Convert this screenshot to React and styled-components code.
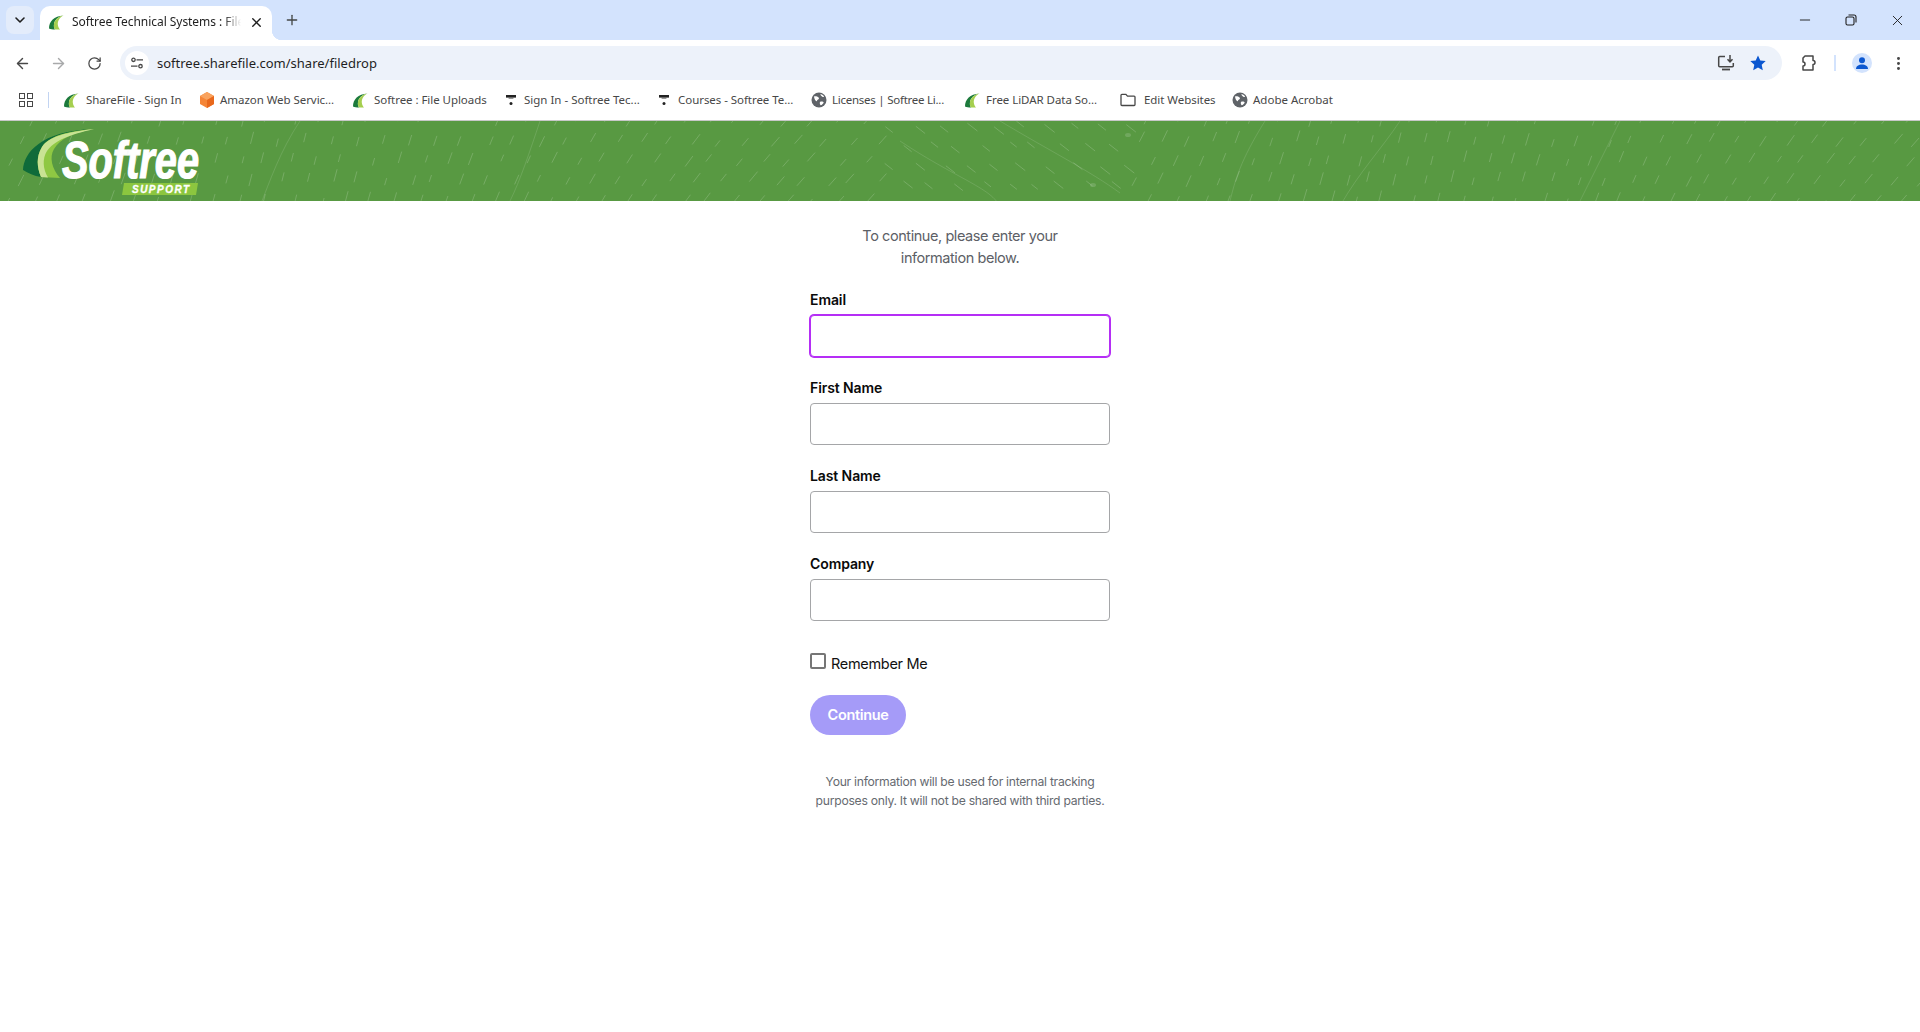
import React, { useMemo } from "react";
import styled, { createGlobalStyle } from "styled-components";
import { ArrowLeft, ArrowRight, RotateCw, Plus, X, ChevronDown, Minus, EllipsisVertical } from "lucide-react";

const Global = createGlobalStyle`
  html, body { margin: 0; padding: 0; background: #fff; height: 100%; overflow: hidden; }
  * { box-sizing: border-box; }
`;

const Page = styled.div`display:flex;flex-direction:column;height:1032px;background:#fff;`;
const TabStrip = styled.div`display:flex;align-items:flex-end;height:40px;background:#d3e3fd;color:#1f1f1f;flex:none;`;
const TabSearch = styled.button`
  width:28px;height:28px;margin:0 6px 6px 6px;border:0;padding:0;border-radius:8px;background:#e3ecfb;
  display:flex;align-items:center;justify-content:center;color:#1f1f1f;
`;
const Tab = styled.div`
  position:relative;width:232px;height:34px;background:#fff;border-radius:10px 10px 0 0;display:flex;align-items:center;padding:0 8px 2px 8px;
  &::after{content:"";position:absolute;right:-10px;bottom:0;width:10px;height:10px;background:radial-gradient(circle at 100% 0,transparent 10px,#fff 10.5px);}
`;
const TabTitle = styled.span`
  flex:1;margin:0 8px;font:12px/16px "Noto Sans",sans-serif;letter-spacing:-.05px;color:#1f1f1f;white-space:nowrap;overflow:hidden;
  -webkit-mask-image:linear-gradient(90deg,#000 90%,transparent);mask-image:linear-gradient(90deg,#000 90%,transparent);
`;
const NewTab = styled.div`width:28px;height:28px;margin:0 0 6px 6px;display:flex;align-items:center;justify-content:center;color:#444746;`;
const WinControls = styled.div`margin-left:auto;display:flex;align-self:stretch;color:#1f1f1f;`;
const WinBtn = styled.div`width:46px;height:40px;display:flex;align-items:center;justify-content:center;`;

const Toolbar = styled.div`display:flex;align-items:center;height:46px;background:#fff;border-radius:8px 8px 0 0;flex:none;padding:0 4px;`;
const NavBtn = styled.div`
  width:36px;height:36px;display:flex;align-items:center;justify-content:center;color:${p=>p.$off?"#a8a9aa":"#474747"};
`;
const Address = styled.div`
  flex:1;height:34px;margin-left:8px;background:#edf2fa;border-radius:17px;display:flex;align-items:center;padding:0 15px 0 5px;
`;
const SiteBtn = styled.div`width:24px;height:24px;border-radius:50%;background:#fff;display:flex;align-items:center;justify-content:center;color:#474747;`;
const Url = styled.span`margin-left:8px;font:13px/18px "Noto Sans",sans-serif;color:#1f1f1f;white-space:nowrap;`;
const AddrEnd = styled.div`margin-left:auto;display:flex;align-items:center;gap:14px;`;
const ToolRight = styled.div`display:flex;align-items:center;margin-left:8px;padding-right:0;`;
const VDivider = styled.div`width:2px;height:16px;background:#d3e3fd;margin:0 8px 0 8px;`;
const Avatar = styled.div`width:20px;height:20px;border-radius:50%;background:#d3e3fd;display:flex;align-items:center;justify-content:center;`;

const Bookmarks = styled.div`display:flex;align-items:center;height:35px;background:#fff;border-bottom:1px solid #c8c8c8;flex:none;padding:0 0 6px 19px;`;
const AppsGrid = styled.div`display:grid;grid-template-columns:6px 6px;gap:2px;`;
const AppsCell = styled.i`display:block;width:6px;height:6px;border:1.3px solid #474747;`;
const BmDivider = styled.div`width:1px;height:16px;background:#c2d4f2;margin:0 13px 0 15px;`;
const BmItem = styled.div`display:flex;align-items:center;width:${p=>p.$w}px;flex:none;padding-left:1px;`;
const BmIconSlot = styled.div`width:${p=>p.$s}px;display:flex;flex:none;justify-content:flex-start;`;
const BmLabel = styled.span`font:11.5px/16px "Noto Sans",sans-serif;letter-spacing:${p=>p.$sp||0}px;color:#474747;white-space:nowrap;`;

const Banner = styled.header`position:relative;height:80px;flex:none;background:#589942;overflow:hidden;`;
const Pattern = styled.svg`position:absolute;inset:0;width:100%;height:100%;`;
const Logo = styled.svg`position:relative;display:block;width:210px;height:80px;`;

const Main = styled.main`width:300px;margin:0 auto;padding-top:24px;font-family:Inter,"Noto Sans",sans-serif;`;
const Intro = styled.p`margin:0 auto 21px;max-width:230px;text-align:center;font-size:14.5px;line-height:22px;color:#5c6066;letter-spacing:-.43px;`;
const Field = styled.div`margin-bottom:21px;`;
const Label = styled.label`display:block;height:20px;margin-bottom:5px;font-size:14px;line-height:20px;font-weight:600;color:#0a0a0a;letter-spacing:-.1px;`;
const Input = styled.input`
  display:block;width:300px;height:42px;background:#fff;border-radius:4px;outline:0;padding:0 10px;
  border:1px solid ${p=>p.$focus?"#b52ef5":"#a5a6a8"};
  box-shadow:${p=>p.$focus?"0 0 0 1px #b52ef5":"none"};
`;
const CheckRow = styled.div`display:flex;align-items:flex-start;height:24px;margin-top:31px;`;
const Check = styled.input`
  appearance:none;width:16px;height:16px;margin:1px 5px 0 0;background:#fff;border:2px solid #767676;border-radius:2px;
`;
const CheckLabel = styled.label`font-size:14.5px;line-height:24px;color:#111;letter-spacing:-.32px;`;
const Continue = styled.button`
  display:block;width:96px;height:40px;margin-top:19px;border:0;border-radius:20px;background:#a59bf8;color:#fff;
  font:600 14.5px/40px Inter,sans-serif;letter-spacing:-.35px;padding:0;
`;
const Note = styled.p`margin:37px 0 0;text-align:center;font-size:12.2px;line-height:19px;color:#666a70;letter-spacing:-.28px;`;
const Fields = styled.div``;

const Swoosh = ({ s = 16 }) => (
  <svg width={s} height={s} viewBox="0 0 16 16" style={{ display: "block" }}>
    <path d="M1 14.500C1 7.500 6 2 15.500 1.500 10 2.800 6.500 6 6 10 5.700 12.500 6 14 7 15.500 4.500 15.500 2.500 15.300 1 14.500Z" fill="#1c7a3c" />
    <path d="M7 15.500C6 14 5.700 12.500 6 10 6.500 6 10 2.800 15.500 1.500 11.500 3.500 9.500 7 9.800 10.500 10 12.500 10.800 14.200 12 15.500Z" fill="#a5cf4f" />
  </svg>
);
const Cube = () => (
  <svg width="18" height="18" viewBox="0 0 18 18" style={{ display: "block" }}>
    <path d="M9 1l7 4v8l-7 4-7-4V5z" fill="#f58536" />
    <path d="M9 1l7 4-7 4-7-4z" fill="#f9a35e" />
    <path d="M9 9l7-4v8l-7 4z" fill="#e8681c" />
  </svg>
);
const Tee = () => (
  <svg width="12" height="12" viewBox="0 0 12 12" style={{ display: "block" }}>
    <rect x="1" y="1" width="10" height="2.6" fill="#222" />
    <rect x="3.6" y="3.6" width="4.8" height="1" fill="#555" />
    <circle cx="6" cy="9.500" r="1.500" fill="#222" />
  </svg>
);
const Globe = () => (
  <svg width="16" height="16" viewBox="0 0 16 16" style={{ display: "block" }}>
    <circle cx="8" cy="8" r="7.500" fill="#5f6368" />
    <path d="M3 4.400c1.500-.4 3.600.1 4.600 1.200 1 1-.1 2-1.300 2.300-.3 1.400-1.200 1.600-1.700.7C4 7.600 3.200 6.300 3 4.400ZM9.200 9.800c1.500-.7 3-.3 3.500.6-.6 1.400-1.800 2.500-3 2.800-.9-.9-1.300-2.300-.5-3.400ZM9.600 2c1.600.4 2.900 1.500 3.500 2.800-1 .5-2.200.1-2.600-.7-.4-.7-1.300-1-.9-2.100Z" fill="#fff" />
  </svg>
);
const Folder = () => (
  <svg width="16" height="14" viewBox="0 0 16 14" style={{ display: "block" }}>
    <path d="M1 2.200c0-.5.4-.9.9-.9h4l1.600 1.800h6.600c.5 0 .9.4.9.9v7.600c0 .5-.4.9-.9.9H1.900c-.5 0-.9-.4-.9-.9Z" fill="none" stroke="#474747" strokeWidth="1.300" />
  </svg>
);

const bookmarks = [
  { w: 135, s: 23, icon: <Swoosh />, text: "ShareFile - Sign In", sp: -0.05 },
  { w: 154, s: 22, icon: <Cube />, text: "Amazon Web Servic...", sp: -0.05 },
  { w: 153, s: 22, icon: <Swoosh />, text: "Softree : File Uploads", sp: -0.05 },
  { w: 153, s: 19, icon: <Tee />, text: "Sign In - Softree Tec..." },
  { w: 153, s: 20, icon: <Tee />, text: "Courses - Softree Te...", sp: -0.05 },
  { w: 153, s: 21, icon: <Globe />, text: "Licenses | Softree Li...", sp: -0.25 },
  { w: 156, s: 22, icon: <Swoosh />, text: "Free LiDAR Data So...", sp: -0.05 },
  { w: 112, s: 24, icon: <Folder />, text: "Edit Websites", sp: -0.05 },
  { w: 110, s: 21, icon: <Globe />, text: "Adobe Acrobat" },
];

function rnd(seed) {
  const x = Math.sin(seed * 127.1) * 43758.5453;
  return x - Math.floor(x);
}

const BannerPattern = () => {
  const dashes = useMemo(() => {
    const out = [];
    let n = 1;
    for (let gx = 0; gx < 1930; gx += 26) {
      for (let gy = 0; gy < 90; gy += 20) {
        n++;
        const x = gx + rnd(n) * 10 + (gy % 40 ? 13 : 0);
        const y = gy + rnd(n + 500) * 6;
        const phase = (x % 1130) / 1130;
        const back = x > 880 && x < 1130;
        const ang = back ? 38 : 62 + 14 * Math.sin(phase * 6.28);
        const len = 7 + rnd(n + 900) * 6;
        const a = (ang * Math.PI) / 180;
        const dx = Math.cos(a) * len;
        const dy = Math.sin(a) * len;
        out.push(back ? `M${x.toFixed(1)} ${y.toFixed(1)}l${dx.toFixed(1)} ${dy.toFixed(1)}` : `M${x.toFixed(1)} ${y.toFixed(1)}l${dx.toFixed(1)} ${(-dy).toFixed(1)}`);
      }
    }
    return out.join("");
  }, []);
  return (
    <Pattern viewBox="0 0 1920 80" preserveAspectRatio="none" aria-hidden="true">
      <path d={dashes} stroke="#fff" strokeOpacity=".18" strokeWidth="1" fill="none" />
      <path d="M900 20C960 60 1000 70 1000 90M1000 0C1050 30 1090 50 1120 72M1265 0C1240 40 1235 60 1230 80M1400 0C1380 30 1360 50 1340 85M540 0C530 30 520 60 510 80M1620 0C1600 40 1590 60 1580 80M300 0C280 30 270 60 260 85"
        stroke="#fff" strokeOpacity=".12" fill="none" />
      <ellipse cx="1128" cy="14" rx="3" ry="2" fill="#fff" fillOpacity=".15" />
      <ellipse cx="1093" cy="64" rx="3" ry="2" fill="#fff" fillOpacity=".15" />
    </Pattern>
  );
};

const BrandLogo = () => (
  <Logo viewBox="0 0 210 80">
    <path d="M23 49C24 32 40 10 94 8C70 10 50 14 42 26C36 36 37 46 41 56C34 55 28 52 23 49Z" fill="#0f6b3a" />
    <path d="M41 56C37 46 36 36 42 26C50 14 70 10 94 8C72 12 60 18 54 28C49 36 52 48 60 57Z" fill="#8fc843" />
    <path d="M41 56C37 46 36 36 42 26C48 16 66 11 94 8C68 14 54 20 47 30C42 38 43 48 48 56.500Z" fill="#c9e394" />
    <text x="62" y="57" textLength="137" lengthAdjust="spacingAndGlyphs" fontFamily="Liberation Sans" fontWeight="700" fontStyle="italic" fontSize="51" fill="#fff" stroke="#fff" strokeWidth="1.2">Softree</text>
    <path d="M124 62H198L196 74H122Z" fill="#8cc63f" />
    <text x="132" y="72" textLength="57" lengthAdjust="spacing" fontFamily="Liberation Sans" fontWeight="700" fontStyle="italic" fontSize="10" fill="#fff" stroke="#fff" strokeWidth=".3">SUPPORT</text>
  </Logo>
);

export default function App() {
  return (
    <Page>
      <Global />
      <TabStrip>
        <TabSearch><ChevronDown size={16} strokeWidth={2.4} /></TabSearch>
        <Tab>
          <Swoosh />
          <TabTitle>Softree Technical Systems : File Uploads</TabTitle>
          <X size={15} strokeWidth={2.2} color="#1f1f1f" />
        </Tab>
        <NewTab><Plus size={16} strokeWidth={2} /></NewTab>
        <WinControls>
          <WinBtn><Minus size={16} strokeWidth={1.4} /></WinBtn>
          <WinBtn>
            <svg width="12" height="12" viewBox="0 0 12 12" fill="none" stroke="#1f1f1f" strokeWidth="1.100">
              <rect x="1" y="3" width="8" height="8" rx="1.500" />
              <path d="M3.500 1h5.500a2 2 0 0 1 2 2v5.500" />
            </svg>
          </WinBtn>
          <WinBtn><X size={17} strokeWidth={1.3} /></WinBtn>
        </WinControls>
      </TabStrip>
      <Toolbar>
        <NavBtn><ArrowLeft size={17} strokeWidth={2} /></NavBtn>
        <NavBtn $off><ArrowRight size={17} strokeWidth={2} /></NavBtn>
        <NavBtn><RotateCw size={15} strokeWidth={2} /></NavBtn>
        <Address>
          <SiteBtn>
            <svg width="14" height="14" viewBox="0 0 14 14" fill="none" stroke="#474747" strokeWidth="1.300">
              <circle cx="3.500" cy="3.800" r="1.700" />
              <path d="M6.500 3.800H13M1 10.200H7.500" />
              <circle cx="10.500" cy="10.200" r="1.700" />
            </svg>
          </SiteBtn>
          <Url>softree.sharefile.com/share/filedrop</Url>
          <AddrEnd>
            <svg width="18" height="18" viewBox="0 0 18 18" fill="none">
              <path d="M8 2.500H2.700a1 1 0 0 0-1 1v8.300a1 1 0 0 0 1 1h12.600a1 1 0 0 0 1-1V9" stroke="#474747" strokeWidth="1.500" />
              <path d="M5 15.500h8" stroke="#474747" strokeWidth="1.800" />
              <path d="M13 1v6.500M10.500 5.200 13 7.800l2.500-2.600" stroke="#474747" strokeWidth="1.500" />
            </svg>
            <svg width="18" height="18" viewBox="0 0 18 18">
              <path d="M9 1.500l2.300 5 5.400.6-4 3.700 1.100 5.400L9 13.500l-4.800 2.700 1.100-5.400-4-3.700 5.400-.6Z" fill="#0b57d0" />
            </svg>
          </AddrEnd>
        </Address>
        <ToolRight>
          <NavBtn>
            <svg width="18" height="18" viewBox="0 0 18 18" fill="none" stroke="#474747" strokeWidth="1.500" strokeLinejoin="round">
              <path d="M6 2h8v4.500a2 2 0 0 1 0 4V16H4v-4a2 2 0 0 0 2-2 2 2 0 0 0-2-2V4Z" />
            </svg>
          </NavBtn>
          <VDivider />
          <NavBtn>
            <Avatar>
              <svg width="14" height="14" viewBox="0 0 14 14">
                <circle cx="7" cy="4.200" r="3" fill="#0b57d0" />
                <path d="M1 13c0-3 2.700-4.500 6-4.500S13 10 13 13Z" fill="#0b57d0" />
              </svg>
            </Avatar>
          </NavBtn>
          <NavBtn><EllipsisVertical size={17} strokeWidth={2.2} /></NavBtn>
        </ToolRight>
      </Toolbar>
      <Bookmarks>
        <AppsGrid>
          <AppsCell /><AppsCell /><AppsCell /><AppsCell />
        </AppsGrid>
        <BmDivider />
        {bookmarks.map((b) => (
          <BmItem key={b.text} $w={b.w}>
            <BmIconSlot $s={b.s}>{b.icon}</BmIconSlot>
            <BmLabel $sp={b.sp}>{b.text}</BmLabel>
          </BmItem>
        ))}
      </Bookmarks>
      <Banner>
        <BannerPattern />
        <BrandLogo />
      </Banner>
      <Main>
        <Intro>To continue, please enter your information below.</Intro>
        <Fields>
          <Field><Label>Email</Label><Input $focus /></Field>
          <Field><Label>First Name</Label><Input /></Field>
          <Field><Label>Last Name</Label><Input /></Field>
          <Field><Label>Company</Label><Input /></Field>
        </Fields>
        <CheckRow>
          <Check type="checkbox" />
          <CheckLabel>Remember Me</CheckLabel>
        </CheckRow>
        <Continue>Continue</Continue>
        <Note>Your information will be used for internal tracking purposes only. It will not be shared with third parties.</Note>
      </Main>
    </Page>
  );
}
